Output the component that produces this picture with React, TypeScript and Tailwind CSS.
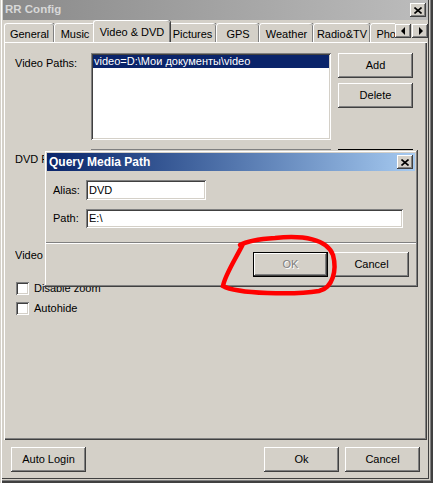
const raised =
  'shadow-[inset_-1px_-1px_#404040,inset_1px_1px_#ffffff,inset_-2px_-2px_#808080,inset_2px_2px_#d4d0c8]'
const sunken =
  'shadow-[inset_1px_1px_#808080,inset_-1px_-1px_#ffffff,inset_2px_2px_#404040,inset_-2px_-2px_#d4d0c8]'

function Btn({ label, className = '', disabled = false }: { label: string; className?: string; disabled?: boolean }) {
  return (
    <div
      className={`flex h-[25px] w-[75px] items-center justify-center bg-[#d4d0c8] ${raised} ${className}`}
    >
      <span className={disabled ? 'text-[#808080] [text-shadow:1px_1px_#ffffff]' : 'text-black'}>{label}</span>
    </div>
  )
}

function CloseBtn() {
  return (
    <div className={`flex h-[14px] w-[16px] items-center justify-center bg-[#d4d0c8] ${raised}`}>
      <svg width="8" height="7" viewBox="0 0 8 7">
        <path d="M0.5 0.5 L7.5 6.5 M7.5 0.5 L0.5 6.5" stroke="#000" strokeWidth="1.6" />
      </svg>
    </div>
  )
}

function Tab({ label, w, active = false }: { label: string; w: number; active?: boolean }) {
  if (active) {
    return (
      <div
        style={{ width: w }}
        className="relative z-10 -mx-[2px] -mb-[1px] flex h-[23px] shrink-0 justify-center rounded-t-[3px] border-l border-t border-white bg-[#d4d0c8] pt-[3px] shadow-[inset_-1px_0_#808080,1px_0_#404040]"
      >
        {label}
      </div>
    )
  }
  return (
    <div
      style={{ width: w }}
      className="flex h-[19px] shrink-0 justify-center overflow-hidden whitespace-nowrap rounded-t-[3px] border-l border-t border-white bg-[#d4d0c8] pt-[2px] shadow-[inset_-1px_0_#808080,1px_0_#404040]"
    >
      {label}
    </div>
  )
}

function Check({ label }: { label: string }) {
  return (
    <div className="flex h-[20px] items-center">
      <div className={`ml-[1px] h-[13px] w-[13px] bg-white ${sunken}`} />
      <span className="ml-[5px]">{label}</span>
    </div>
  )
}

export default function App() {
  return (
    <div className="relative h-[483px] w-[433px] overflow-hidden bg-[#d4d0c8] font-['Liberation_Sans',Arial,sans-serif] text-[11px] text-black">
      <div className="flex h-full flex-col pb-[3px] pl-[3px] pr-[5px] shadow-[inset_1px_0_#d4d0c8,inset_2px_0_#ffffff,inset_-2px_-2px_#404040,inset_-3px_-3px_#808080,inset_-4px_-4px_#d4d0c8,inset_-5px_-5px_#404040]">
        {/* title bar */}
        <div className="flex h-[20px] shrink-0 items-center justify-between bg-gradient-to-r from-[#8a8a8a] to-[#bcbcbc] pl-[2px] pr-[2px]">
          <span className="text-[11.5px] font-bold text-[#d8d8d8]">RR Config</span>
          <CloseBtn />
        </div>

        {/* tabs */}
        <div className="flex h-[22px] shrink-0 items-end pl-[1px]">
          <div className="flex h-full w-[392px] items-end overflow-hidden">
            <Tab label="General" w={50} />
            <Tab label="Music" w={41} />
            <Tab label="Video & DVD" w={77} active />
            <Tab label="Pictures" w={48} />
            <Tab label="GPS" w={43} />
            <Tab label="Weather" w={54} />
            <Tab label="Radio&TV" w={57} />
            <Tab label="Photos" w={46} />
          </div>
          <div className="mb-[4px] flex gap-[1px]">
            <div className={`flex h-[14px] w-[16px] items-center justify-center bg-[#d4d0c8] ${raised}`}>
              <svg width="5" height="8" viewBox="0 0 5 8"><path d="M4 0 L0 4 L4 8 Z" fill="#000" /></svg>
            </div>
            <div className={`flex h-[14px] w-[16px] items-center justify-center bg-[#d4d0c8] ${raised}`}>
              <svg width="5" height="8" viewBox="0 0 5 8"><path d="M1 0 L5 4 L1 8 Z" fill="#000" /></svg>
            </div>
          </div>
        </div>

        {/* tab panel */}
        <div className="mx-[1px] flex h-[398px] shrink-0 flex-col pl-[11px] pt-[11px] shadow-[inset_1px_1px_#ffffff,inset_-1px_-1px_#404040,inset_-2px_-2px_#808080]">
          <div className="flex items-start">
            <div className="w-[76px] pt-[2px]">Video Paths:</div>
            <div className={`h-[87px] w-[240px] bg-white p-[2px] ${sunken}`}>
              <div className="h-[13px] whitespace-nowrap bg-[#0a246a] pl-[1px] leading-[13px] text-white">
                video=D:\Мои документы\video
              </div>
            </div>
            <div className="ml-[7px] flex flex-col gap-[5px]">
              <Btn label="Add" />
              <Btn label="Delete" />
            </div>
          </div>

          <div className="mt-[9px] flex items-start">
            <div className="w-[76px] pt-[2px]">
              <div className="w-[29px] overflow-hidden whitespace-nowrap">DVD Path:</div>
            </div>
            <div className={`h-[21px] w-[240px] bg-white ${sunken}`} />
            <div className="ml-[7px] h-[25px] w-[75px] border border-black bg-[#d4d0c8]" />
          </div>

          <div className="mt-[71px] flex items-start">
            <div className="w-[29px] overflow-hidden whitespace-nowrap pt-[2px]">Video Mode:</div>
          </div>

          <div className="mt-[15px] flex flex-col">
            <Check label="Disable zoom" />
            <Check label="Autohide" />
          </div>
        </div>

        {/* bottom buttons */}
        <div className="mt-[7px] flex px-[8px]">
          <Btn label="Auto Login" />
          <div className="flex-1" />
          <Btn label="Ok" />
          <Btn label="Cancel" className="ml-[6px]" />
        </div>
      </div>

      {/* Query Media Path dialog */}
      <div
        className={`absolute left-[44px] top-[150px] flex h-[137px] w-[374px] flex-col bg-[#d4d0c8] p-[3px] shadow-[inset_-1px_-1px_#404040,inset_1px_1px_#d4d0c8,inset_-2px_-2px_#808080,inset_2px_2px_#ffffff]`}
      >
        <div className="flex h-[18px] items-center justify-between bg-gradient-to-r from-[#0a246a] to-[#a6caf0] pl-[2px] pr-[2px]">
          <span className="text-[12px] font-bold text-white">Query Media Path</span>
          <CloseBtn />
        </div>
        <div className="mt-[9px] flex items-center pl-[6px]">
          <div className="w-[33px]">Alias:</div>
          <div className={`flex h-[20px] w-[120px] items-center bg-white pl-[3px] ${sunken}`}>DVD</div>
        </div>
        <div className="mt-[9px] flex items-center pl-[6px]">
          <div className="w-[33px]">Path:</div>
          <div className={`flex h-[19px] w-[317px] items-center bg-white pl-[3px] ${sunken}`}>E:\</div>
        </div>
        <div className="-mx-[1px] mt-[14px] h-[2px] border-b border-t border-b-white border-t-[#808080]" />
        <div className="mt-[8px] flex justify-end gap-[6px] pr-[6px]">
          <Btn label="OK" disabled className="border border-black" />
          <Btn label="Cancel" />
        </div>
      </div>

      {/* red annotation */}
      <svg className="pointer-events-none absolute left-[215px] top-[230px]" width="125" height="70" viewBox="0 0 125 70">
        <path
          d="M28 14 C20 30 10 45 8 56 C22 64 80 65 104 61 C118 58 122 40 118 25 C112 9 88 5 60 8 C45 9 32 11 25 15"
          fill="none"
          stroke="#ff0000"
          strokeWidth="4.5"
          strokeLinecap="round"
        />
      </svg>
    </div>
  )
}
